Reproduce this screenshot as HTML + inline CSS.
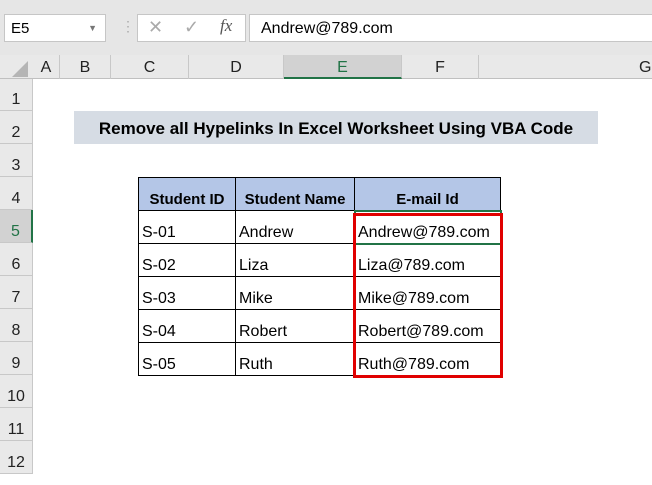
<!DOCTYPE html>
<html><head><style>
body{margin:0;width:652px;height:476px;overflow:hidden;background:#fff;font-family:"Liberation Sans",sans-serif;position:relative}
.a{position:absolute}
.ch{position:absolute;top:55px;height:24px;line-height:25px;text-align:center;font-size:16px;color:#222;border-right:1px solid #c8c8c8;box-sizing:border-box}
.rh{position:absolute;left:0;width:33px;height:33px;line-height:44px;text-align:center;font-size:16px;color:#222;border-bottom:1px solid #c8c8c8;box-sizing:border-box;background:#e9e9e9;border-right:1px solid #c8c8c8}
.c{position:absolute;height:34px;line-height:44px;font-size:16px;color:#000;border:1px solid #000;box-sizing:border-box;padding-left:3px;white-space:nowrap;overflow:hidden}
.h{background:#b4c6e7;font-weight:bold;text-align:center;padding:0;font-size:15px}
</style></head><body>
<div class="a" style="left:0;top:0;width:652px;height:55px;background:#e6e6e6"></div>
<div class="a" style="left:4px;top:14px;width:102px;height:28px;background:#fff;border:1px solid #c6c6c6;box-sizing:border-box;font-size:15px;line-height:27px;padding-left:6px">E5<span style="position:absolute;right:8px;top:0;font-size:9px;color:#777">▼</span></div>
<div class="a" style="left:121px;top:18px;color:#aaa;font-size:14px">⋮</div>
<div class="a" style="left:137px;top:14px;width:109px;height:28px;background:#fff;border:1px solid #c6c6c6;box-sizing:border-box"></div>
<div class="a" style="left:148px;top:17px;color:#aaa;font-size:18px">✕</div>
<div class="a" style="left:184px;top:17px;color:#aaa;font-size:18px">✓</div>
<div class="a" style="left:220px;top:16px;color:#555;font-size:17px;font-style:italic;font-family:'Liberation Serif',serif">fx</div>
<div class="a" style="left:249px;top:14px;width:410px;height:28px;background:#fff;border:1px solid #c6c6c6;box-sizing:border-box;font-size:16px;line-height:27px;padding-left:11px">Andrew@789.com</div>
<div class="a" style="left:0;top:55px;width:652px;height:24px;background:#e9e9e9;border-bottom:1px solid #c0c0c0;box-sizing:border-box"></div>
<svg class="a" style="left:12px;top:61px" width="16" height="16"><polygon points="16,0 16,16 0,16" fill="#b5b5b5"/></svg>
<div class="ch" style="left:33px;width:27px">A</div>
<div class="ch" style="left:60px;width:51px">B</div>
<div class="ch" style="left:111px;width:78px">C</div>
<div class="ch" style="left:189px;width:95px">D</div>
<div class="ch" style="left:284px;width:118px;background:#d2d2d2;border-bottom:2px solid #217346;color:#217346">E</div>
<div class="ch" style="left:402px;width:77px">F</div>
<div class="ch" style="left:479px;width:190px;text-align:left;padding-left:160px">G</div>
<div class="rh" style="top:79px;height:32px;line-height:42px">1</div>
<div class="rh" style="top:111px">2</div>
<div class="rh" style="top:144px">3</div>
<div class="rh" style="top:177px">4</div>
<div class="rh" style="top:210px;background:#d2d2d2;color:#217346;border-right:2px solid #217346">5</div>
<div class="rh" style="top:243px">6</div>
<div class="rh" style="top:276px">7</div>
<div class="rh" style="top:309px">8</div>
<div class="rh" style="top:342px">9</div>
<div class="rh" style="top:375px">10</div>
<div class="rh" style="top:408px">11</div>
<div class="rh" style="top:441px">12</div>
<div class="a" style="left:74px;top:111px;width:524px;height:33px;background:#d6dce4;text-align:center;line-height:36px;font-weight:bold;font-size:17px">Remove all Hypelinks In Excel Worksheet Using VBA Code</div>
<div class="c h" style="left:138px;top:177px;width:98px">Student ID</div>
<div class="c h" style="left:235px;top:177px;width:120px">Student Name</div>
<div class="c h" style="left:354px;top:177px;width:147px">E-mail Id</div>
<div class="c" style="left:138px;top:210px;width:98px">S-01</div><div class="c" style="left:235px;top:210px;width:120px">Andrew</div><div class="c" style="left:354px;top:210px;width:147px">Andrew@789.com</div>
<div class="c" style="left:138px;top:243px;width:98px">S-02</div><div class="c" style="left:235px;top:243px;width:120px">Liza</div><div class="c" style="left:354px;top:243px;width:147px">Liza@789.com</div>
<div class="c" style="left:138px;top:276px;width:98px">S-03</div><div class="c" style="left:235px;top:276px;width:120px">Mike</div><div class="c" style="left:354px;top:276px;width:147px">Mike@789.com</div>
<div class="c" style="left:138px;top:309px;width:98px">S-04</div><div class="c" style="left:235px;top:309px;width:120px">Robert</div><div class="c" style="left:354px;top:309px;width:147px">Robert@789.com</div>
<div class="c" style="left:138px;top:342px;width:98px">S-05</div><div class="c" style="left:235px;top:342px;width:120px">Ruth</div><div class="c" style="left:354px;top:342px;width:147px">Ruth@789.com</div>
<div class="a" style="left:354px;top:210px;width:148px;height:35px;border:2px solid #217346;box-sizing:border-box"></div>
<div class="a" style="left:353px;top:213px;width:150px;height:165px;border:3px solid #e00000;box-sizing:border-box"></div>
</body></html>
